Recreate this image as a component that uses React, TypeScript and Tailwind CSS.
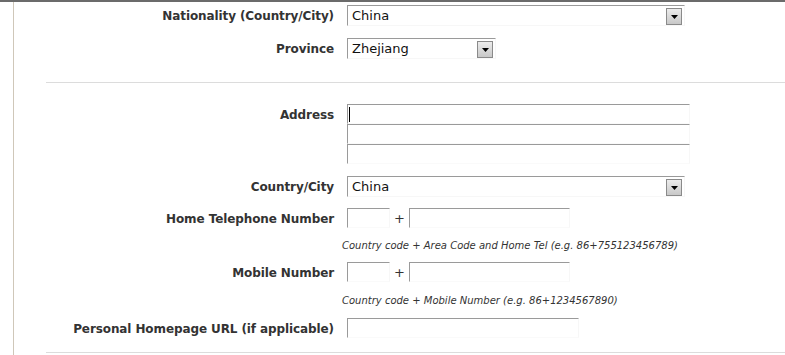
const Arrow = () => (
  <span className="absolute right-[2px] top-[2px] flex h-[17px] w-[16px] items-center justify-center border border-[#8a8a8a] bg-gradient-to-b from-[#ececec] to-[#c8c8c8]">
    <svg width="7" height="4" viewBox="0 0 7 4">
      <path d="M0 0h7L3.5 4z" fill="#000" />
    </svg>
  </span>
);

const Select = ({ value, w }: { value: string; w: string }) => (
  <div
    className={`relative h-[21px] ${w} border-t border-l border-[#9a9a9a] border-r border-b border-r-[#f7f7f7] border-b-[#f7f7f7] pl-[4px] text-[13px] leading-[20px] text-[#111]`}
  >
    {value}
    <Arrow />
  </div>
);

const Input = ({ w, caret }: { w: string; caret?: boolean }) => (
  <div
    className={`relative h-[20px] ${w} border-t border-l border-[#9a9a9a] border-r border-b border-r-[#f7f7f7] border-b-[#fafafa]`}
  >
    {caret && <span className="absolute left-[1px] top-[2px] h-[15px] w-px bg-black" />}
  </div>
);

const Row = ({
  label,
  children,
  className = "",
}: {
  label: string;
  children: React.ReactNode;
  className?: string;
}) => (
  <div className={`flex items-start ${className}`}>
    <div className="w-[320px] pt-px text-right text-[12px] font-bold leading-[20px] tracking-[-0.1px] text-[#333]">
      {label}
    </div>
    <div className="ml-[13px]">{children}</div>
  </div>
);

const Hint = ({ text, className = "" }: { text: string; className?: string }) => (
  <div className={`pl-[328px] text-[10px] italic leading-[14px] text-[#333] ${className}`}>
    {text}
  </div>
);

const Phone = () => (
  <div className="flex items-start">
    <Input w="w-[43px]" />
    <span className="w-[19px] text-center text-[13px] leading-[22px] text-[#333]">+</span>
    <Input w="w-[161px]" />
  </div>
);

export default function App() {
  return (
    <div
      className="h-[355px] w-[785px] overflow-hidden border-t-2 border-[#6b6b6b] bg-white"
      style={{ fontFamily: '"DejaVu Sans", Verdana, sans-serif' }}
    >
      <div className="ml-[13px] h-full border-l border-[#cfc7b9]">
        <Row label="Nationality (Country/City)" className="pt-[3px]">
          <Select value="China" w="w-[338px]" />
        </Row>
        <Row label="Province" className="mt-[12px]">
          <Select value="Zhejiang" w="w-[149px]" />
        </Row>

        <div className="ml-[32px] mt-[23px] h-px bg-[#dcdcdc]" />

        <Row label="Address" className="mt-[21px]">
          <div className="flex flex-col">
            <Input w="w-[343px]" caret />
            <Input w="w-[343px]" />
            <Input w="w-[343px]" />
          </div>
        </Row>
        <Row label="Country/City" className="mt-[12px]">
          <Select value="China" w="w-[338px]" />
        </Row>
        <Row label="Home Telephone Number" className="mt-[11px]">
          <Phone />
        </Row>
        <Hint
          text="Country code + Area Code and Home Tel (e.g. 86+755123456789)"
          className="mt-[9px]"
        />
        <Row label="Mobile Number" className="mt-[9px]">
          <Phone />
        </Row>
        <Hint
          text="Country code + Mobile Number (e.g. 86+1234567890)"
          className="mt-[10px]"
        />
        <Row label="Personal Homepage URL (if applicable)" className="mt-[10px]">
          <Input w="w-[232px]" />
        </Row>

        <div className="ml-[32px] mt-[13px] h-px bg-[#dcdcdc]" />
      </div>
    </div>
  );
}
